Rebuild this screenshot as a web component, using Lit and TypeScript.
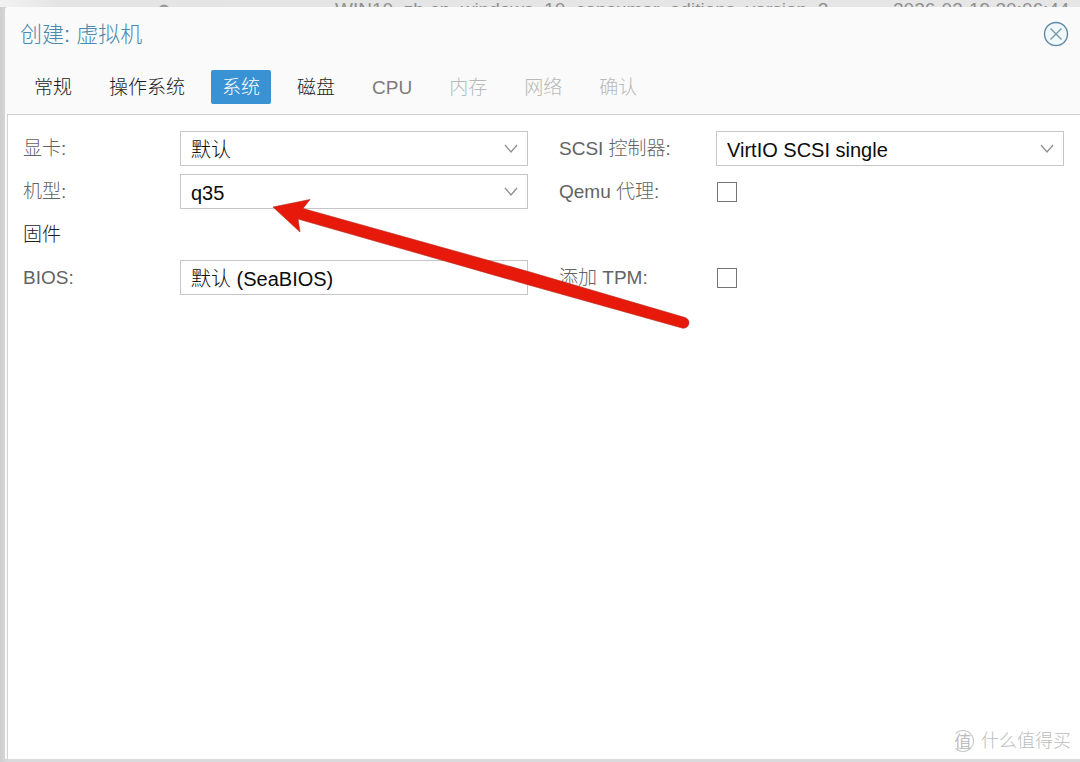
import { LitElement, html, css, svg, nothing } from "lit";
import { customElement, property, state } from "lit/decorators.js";
import { classMap } from "lit/directives/class-map.js";

const FONT = css`"Liberation Sans", "Noto Sans CJK SC", sans-serif`;

type Tab = { label: string; status: "open" | "next" | "locked" };

const TABS: Tab[] = [
  { label: "常规", status: "open" },
  { label: "操作系统", status: "open" },
  { label: "系统", status: "open" },
  { label: "磁盘", status: "open" },
  { label: "CPU", status: "next" },
  { label: "内存", status: "locked" },
  { label: "网络", status: "locked" },
  { label: "确认", status: "locked" },
];

const fieldRow = css`
  :host {
    display: grid;
    grid-template-columns: 157px minmax(0, 1fr);
    align-items: center;
    height: 35px;
  }
  .label {
    padding-top: 1px;
    color: #636363;
  }
`;

@customElement("select-field")
export class SelectField extends LitElement {
  @property() label = "";
  @property({ type: Array }) options: string[] = [];
  @property({ type: Boolean }) plain = false;

  static styles = [
    fieldRow,
    css`
      .box {
        display: grid;
        height: 35px;
      }
      .select {
        grid-area: 1 / 1;
        appearance: none;
        width: 100%;
        margin: 0;
        padding: 2px 34px 0 10px;
        border: 1px solid #c6c6c6;
        border-radius: 0;
        background: #fff;
        color: #0c0c0c;
        font: inherit;
        font-size: 20px;
        outline: none;
      }
      .chevron {
        grid-area: 1 / 1;
        place-self: center end;
        margin-right: 10px;
        pointer-events: none;
      }
    `,
  ];

  render() {
    return html`
      <label class="label" for="field">${this.label}</label>
      <div class="box">
        <select class="select" id="field">
          ${this.options.map((o) => html`<option>${o}</option>`)}
        </select>
        ${this.plain
          ? nothing
          : html`<svg class="chevron" width="14" height="10" viewBox="0 0 14 10" aria-hidden="true">
              ${svg`<path d="M1 1 L7 8 L13 1" fill="none" stroke="#8f8f8f" stroke-width="1.3"/>`}
            </svg>`}
      </div>
    `;
  }
}

@customElement("check-field")
export class CheckField extends LitElement {
  @property() label = "";

  static styles = [
    fieldRow,
    css`
      .check {
        appearance: none;
        width: 20px;
        height: 20px;
        margin: 0 1px;
        border: 1px solid #757575;
        background: #fff;
      }
      .check:checked {
        background: #3892d4;
      }
    `,
  ];

  render() {
    return html`
      <label class="label" for="field">${this.label}</label>
      <input class="check" id="field" type="checkbox" />
    `;
  }
}

@customElement("app-root")
export class AppRoot extends LitElement {
  @state() private active = 2;

  static styles = css`
    :host {
      display: flex;
      flex-direction: column;
      box-sizing: border-box;
      min-height: 100vh;
      padding: 0 0 3px 5px;
      background: linear-gradient(90deg, #cecece, #d9dadb 8px);
      font: 300 19px/24px ${FONT};
    }
    .backdrop {
      display: grid;
      grid-template-columns: 153px 177px minmax(0, 1fr) 187px;
      height: 7px;
      margin-left: -5px;
      padding-left: 5px;
      overflow: hidden;
      background: linear-gradient(90deg, #f2f2f2, #e4e4e4 60px, #e6e6e6);
      color: #8f8f8f;
      line-height: 20px;
      white-space: nowrap;
    }
    .dot {
      margin-top: 4px;
    }
    .dialog {
      position: relative;
      flex: 1;
      display: flex;
      flex-direction: column;
      background: #fafafa;
      border-top-left-radius: 3px;
    }
    .titlebar {
      display: flex;
      align-items: center;
      justify-content: space-between;
      height: 54px;
      padding: 0 11px 0 15px;
    }
    .title {
      margin: 0;
      padding-top: 2px;
      font-size: 22px;
      font-weight: 300;
      color: #4a8aac;
    }
    .close {
      display: grid;
      padding: 0;
      border: 0;
      background: none;
    }
    .tabs {
      display: flex;
      gap: 15px;
      padding: 9px 18px 10px;
    }
    .tab {
      height: 34px;
      padding: 1px 11px 0;
      border: 0;
      border-radius: 2px;
      background: none;
      color: #1c1c1c;
      font: inherit;
    }
    .next {
      color: #7c7c7c;
    }
    .locked {
      color: #b8b8b8;
    }
    .active {
      background: #3892d4;
      color: #fff;
    }
    .body {
      flex: 1;
      display: grid;
      grid-template-columns: minmax(0, 1fr) minmax(0, 1fr);
      grid-auto-rows: 35px;
      gap: 8px 31px;
      margin-left: 2px;
      padding: 16px 16px 16px 15px;
      border-top: 1px solid #cfcfcf;
      border-left: 1px solid #d4d4d4;
      background: #fff;
    }
    .section {
      grid-column: 1 / -1;
      display: flex;
      align-items: center;
      margin: 0;
      padding-top: 1px;
      color: #222;
      font-size: 19px;
      font-weight: 300;
    }
    .arrow {
      position: absolute;
      left: 267px;
      top: 188px;
      pointer-events: none;
    }
    .watermark {
      position: absolute;
      right: 9px;
      bottom: 6px;
      display: flex;
      align-items: center;
      gap: 7px;
      color: #bdbdbd;
      font-size: 18px;
    }
    .badge {
      display: grid;
      place-items: center;
      box-sizing: border-box;
      width: 22px;
      height: 22px;
      border: 1px solid #c9c9c9;
      border-left-color: transparent;
      border-radius: 50%;
      font-size: 17px;
      font-weight: 400;
    }
  `;

  render() {
    return html`
      <div class="backdrop">
        <span></span>
        <svg class="dot" width="12" height="12" viewBox="0 0 12 12" aria-hidden="true">
          <circle cx="6" cy="6" r="5.5" fill="#9a9a9a" />
        </svg>
        <span>WIN10_zh-cn_windows_10_consumer_editions_version_2</span>
        <span>2026-03-19 20:06:44</span>
      </div>
      <section class="dialog" role="dialog" aria-labelledby="title">
        <header class="titlebar">
          <h1 class="title" id="title">创建: 虚拟机</h1>
          <button class="close" aria-label="关闭">
            <svg width="26" height="26" viewBox="0 0 26 26" fill="none">
              <circle cx="13" cy="13" r="11.5" fill="#f0f8fc" stroke="#5f8aa5" stroke-width="1.4" />
              <path d="M7.5 7.5 L18.5 18.5 M18.5 7.5 L7.5 18.5" stroke="#7593a5" stroke-width="1.2" />
            </svg>
          </button>
        </header>
        <nav class="tabs">
          ${TABS.map(
            (t, i) => html`<button
              class=${classMap({ tab: true, [t.status]: true, active: i === this.active })}
              ?disabled=${t.status === "locked"}
              @click=${() => (this.active = i)}
            >${t.label}</button>`
          )}
        </nav>
        <main class="body">
          <select-field label="显卡:" .options=${["默认"]}></select-field>
          <select-field label="SCSI 控制器:" .options=${["VirtIO SCSI single"]}></select-field>
          <select-field label="机型:" .options=${["q35"]}></select-field>
          <check-field label="Qemu 代理:"></check-field>
          <h2 class="section">固件</h2>
          <select-field label="BIOS:" plain .options=${["默认 (SeaBIOS)"]}></select-field>
          <check-field label="添加 TPM:"></check-field>
        </main>
        <svg class="arrow" width="420" height="140" viewBox="0 0 420 140" aria-hidden="true">
          <path
            d="M1 12 L38 4.5 L31 13.5 L258 77 L413 122.5 A5.4 5.4 0 0 1 410 133 L255 89.5 L26 24 L28 37 Z"
            fill="#e6190b" stroke="#b5281c" stroke-width="0.6"
          />
        </svg>
        <div class="watermark"><span class="badge">值</span><span>什么值得买</span></div>
      </section>
    `;
  }
}
